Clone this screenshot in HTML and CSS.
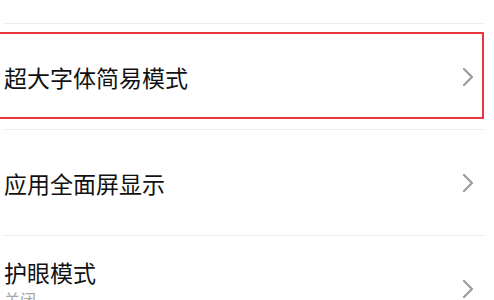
FILE: index.html
```html
<!DOCTYPE html>
<html>
<head>
  <meta charset="UTF-8">
  <meta name="viewport" content="width=device-width, initial-scale=1.0">
  <link rel="stylesheet" href="styles.css">
</head>
<body>
  <div class="settings-list">
    <div class="row-tail"></div>

    <div class="setting-row is-marked">
      <div class="setting-text">
        <div class="setting-title">超大字体简易模式</div>
      </div>
      <svg class="chevron" viewBox="0 0 12 20" width="12" height="20">
        <path d="M2 2 L10 10 L2 18" fill="none" stroke="#9b9b9b" stroke-width="2.2" stroke-linecap="round" stroke-linejoin="round"/>
      </svg>
      <div class="mark-box"></div>
    </div>

    <div class="setting-row">
      <div class="setting-text">
        <div class="setting-title">应用全面屏显示</div>
      </div>
      <svg class="chevron" viewBox="0 0 12 20" width="12" height="20">
        <path d="M2 2 L10 10 L2 18" fill="none" stroke="#9b9b9b" stroke-width="2.2" stroke-linecap="round" stroke-linejoin="round"/>
      </svg>
    </div>

    <div class="setting-row">
      <div class="setting-text with-sub">
        <div class="setting-title">护眼模式</div>
        <div class="setting-sub">关闭</div>
      </div>
      <svg class="chevron" viewBox="0 0 12 20" width="12" height="20">
        <path d="M2 2 L10 10 L2 18" fill="none" stroke="#9b9b9b" stroke-width="2.2" stroke-linecap="round" stroke-linejoin="round"/>
      </svg>
    </div>
  </div>
</body>
</html>
```

FILE: styles.css
```css
* {
  box-sizing: border-box;
  font-family: "Noto Sans CJK SC", "Noto Sans", sans-serif;
}
body {
  margin: 0;
  padding: 0;
  background: #fff;
  overflow: hidden;
}
.settings-list {
  width: 480px;
  margin-left: 4px;
}
.row-tail {
  height: 24px;
  border-bottom: 1px solid #ececec;
}
.setting-row {
  position: relative;
  display: flex;
  align-items: center;
  height: 106px;
  border-bottom: 1px solid #ececec;
}
.setting-text {
  flex: 1;
}
.setting-text.with-sub {
  align-self: flex-start;
  padding-top: 20px;
}
.setting-title {
  font-size: 23px;
  line-height: 32px;
  color: #111;
}
.setting-sub {
  font-size: 16px;
  line-height: 22px;
  color: #a8a8a8;
}
.chevron {
  margin-right: 10px;
  flex-shrink: 0;
}
.mark-box {
  position: absolute;
  top: 8px;
  bottom: 10px;
  left: -10px;
  right: 0;
  border: 2px solid #e8363c;
}
```
